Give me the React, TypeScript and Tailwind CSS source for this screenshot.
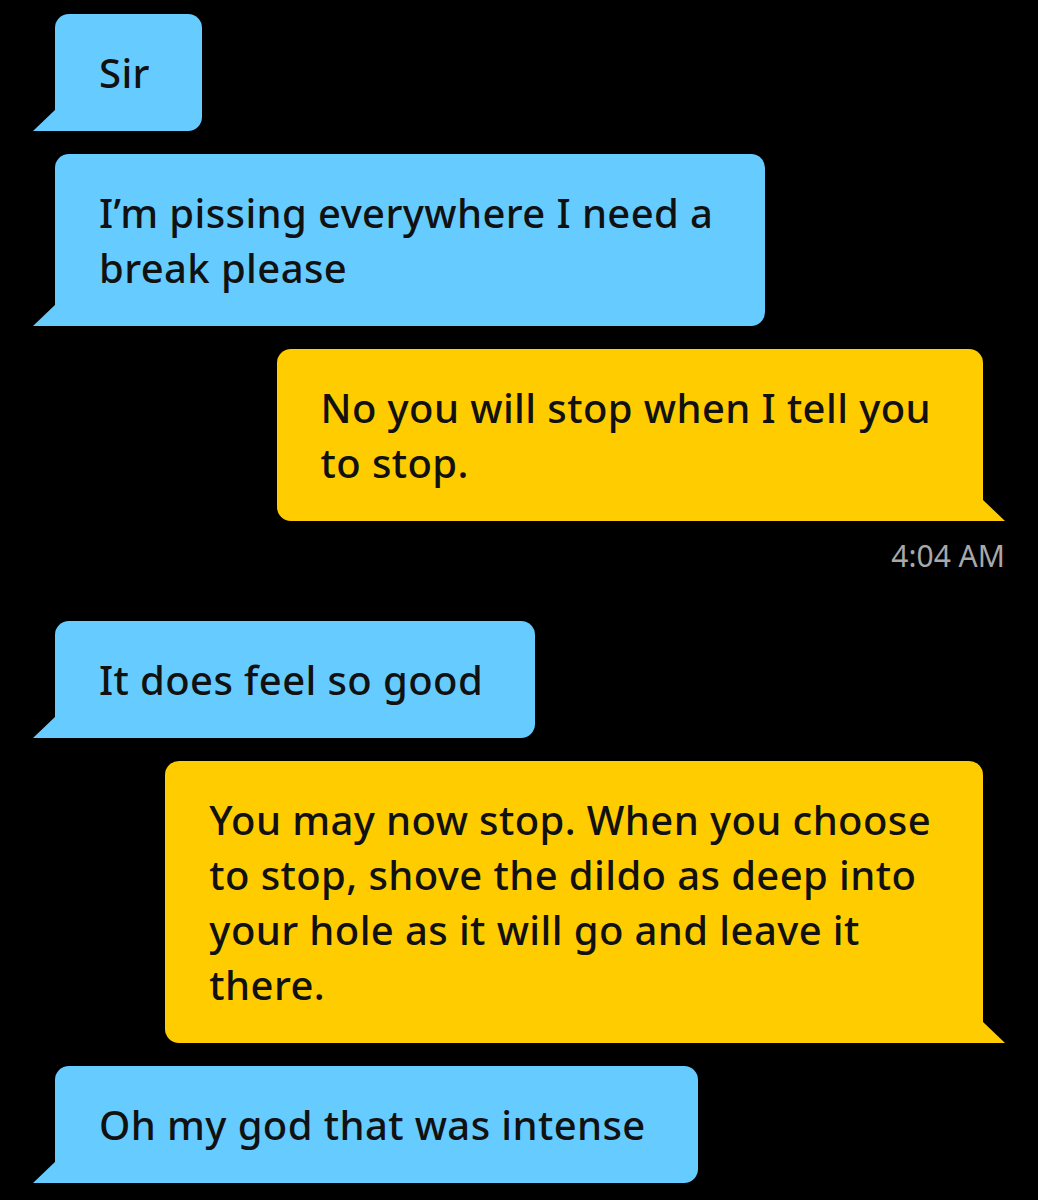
import type { ReactNode } from "react";

type Side = "in" | "out";

const thread: { side: Side; lines: string[]; time?: string }[] = [
  { side: "in", lines: ["Sir"] },
  { side: "in", lines: ["I’m pissing everywhere I need a", "break please"] },
  { side: "out", lines: ["No you will stop when I tell you", "to stop."], time: "4:04 AM" },
  { side: "in", lines: ["It does feel so good"] },
  {
    side: "out",
    lines: [
      "You may now stop. When you choose",
      "to stop, shove the dildo as deep into",
      "your hole as it will go and leave it",
      "there.",
    ],
  },
  { side: "in", lines: ["Oh my god that was intense"] },
];

function Bubble({ side, children }: { side: Side; children: ReactNode }) {
  const incoming = side === "in";
  return (
    <div
      className={`relative w-fit py-[31px] pl-[44px] pr-[52px] text-[40px] font-medium leading-[55px] tracking-[0.4px] text-[#111] ${
        incoming
          ? "ml-[22px] rounded-[14px] rounded-bl-none bg-[#66ccff]"
          : "mr-[22px] ml-auto rounded-[14px] rounded-br-none bg-[#ffcc00]"
      }`}
    >
      {children}
      {/* tail */}
      <svg
        width="23"
        height="22"
        viewBox="0 0 23 22"
        className={`absolute bottom-0 ${incoming ? "-left-[22px]" : "-right-[22px]"}`}
      >
        {incoming ? (
          <polygon points="0,22 23,22 23,0" fill="#66ccff" />
        ) : (
          <polygon points="0,0 23,22 0,22" fill="#ffcc00" />
        )}
      </svg>
    </div>
  );
}

export default function App() {
  return (
    <div
      className="min-h-[1200px] w-full bg-black px-[33px] pt-[14px]"
      style={{ fontFamily: '"Noto Sans", "Open Sans", sans-serif' }}
    >
      <div className="flex flex-col">
        {thread.map((msg, i) => (
          <div key={i} className={i > 0 && !thread[i - 1].time ? "mt-[23px]" : i > 0 ? "mt-[47px]" : ""}>
            <Bubble side={msg.side}>
              {msg.lines.map((line, j) => (
                <div key={j} className="whitespace-nowrap">
                  {line}
                </div>
              ))}
            </Bubble>
            {msg.time && (
              <div className="mt-[17px] text-right text-[30px] leading-[36px] text-[#a8a8a8]">
                {msg.time}
              </div>
            )}
          </div>
        ))}
      </div>
    </div>
  );
}
